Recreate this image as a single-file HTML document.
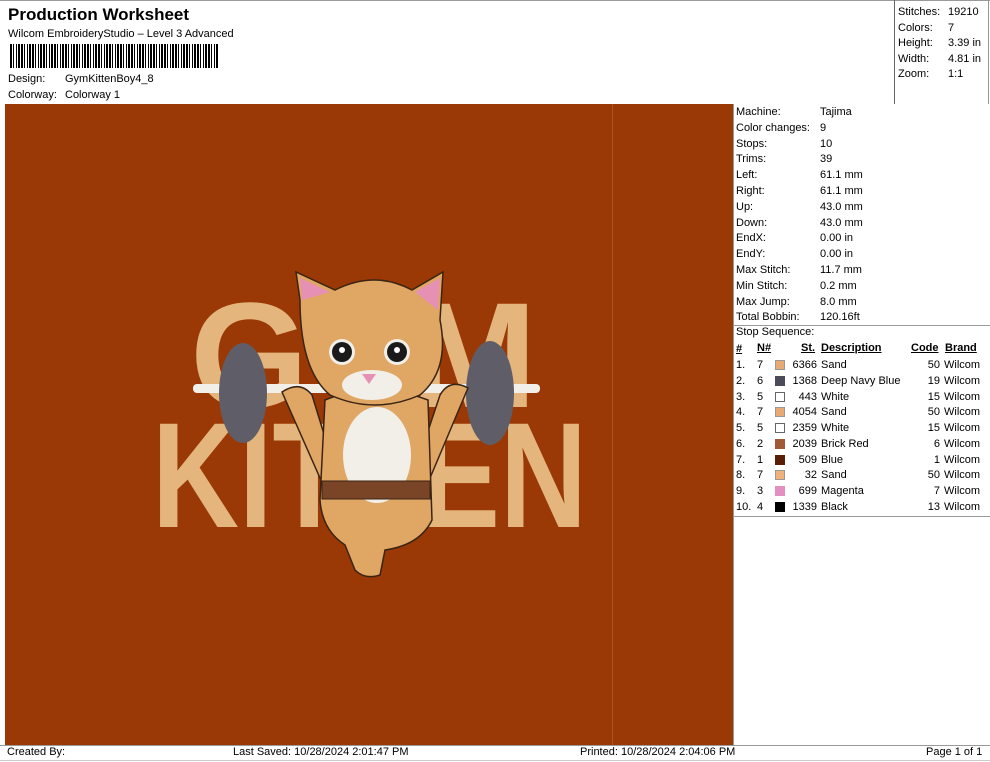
<!DOCTYPE html>
<html><head><meta charset="utf-8"><style>
*{margin:0;padding:0;box-sizing:border-box}
body{width:990px;height:762px;background:#fff;font-family:"Liberation Sans",sans-serif;color:#000;position:relative;overflow:hidden;font-size:11px}
.a{position:absolute;white-space:nowrap}
</style></head><body>
<div class="a" style="left:0;top:0;width:990px;height:1px;background:#999"></div>
<div class="a" style="left:8px;top:5px;font-size:17px;font-weight:bold">Production Worksheet</div>
<div class="a" style="left:8px;top:28px">Wilcom EmbroideryStudio – Level 3 Advanced</div>
<div class="a" style="left:10px;top:44px;width:208px;height:24px;background:repeating-linear-gradient(90deg,#000 0 2px,#fff 2px 3px,#000 3px 4px,#fff 4px 6px,#000 6px 7px,#fff 7px 8px,#000 8px 10px,#fff 10px 11px)"></div>
<div class="a" style="left:8px;top:73px">Design:</div><div class="a" style="left:65px;top:73px">GymKittenBoy4_8</div>
<div class="a" style="left:8px;top:89px">Colorway:</div><div class="a" style="left:65px;top:89px">Colorway 1</div>
<div class="a" style="left:894px;top:0;width:1px;height:104px;background:#666"></div>
<div class="a" style="left:988px;top:0;width:1px;height:104px;background:#999"></div>
<div class="a" style="left:898px;top:5px;line-height:15.6px">Stitches:<br>Colors:<br>Height:<br>Width:<br>Zoom:</div>
<div class="a" style="left:948px;top:5px;line-height:15.6px">19210<br>7<br>3.39 in<br>4.81 in<br>1:1</div>
<div class="a" style="left:5px;top:104px;width:728px;height:641px;background:#9a3905"></div>
<div class="a" style="left:612px;top:104px;width:1px;height:641px;background:#a85428"></div>
<svg class="a" style="left:0;top:0" width="733" height="745">
<g fill="#e4b67d" font-family="Liberation Sans" font-weight="bold">
<text x="190" y="407" font-size="150" textLength="347" lengthAdjust="spacingAndGlyphs">GYM</text>
<text x="152" y="527" font-size="150" textLength="435" lengthAdjust="spacingAndGlyphs">KITTEN</text>
</g>
<rect x="193" y="384" width="347" height="9" rx="4" fill="#f2efe8"/>
<ellipse cx="243" cy="393" rx="24" ry="50" fill="#5f5e68"/>
<ellipse cx="490" cy="393" rx="24" ry="52" fill="#5f5e68"/>
<g fill="#e0a663" stroke="#3a2414" stroke-width="1.5">
<path d="M282 392 Q300 380 312 395 L335 470 L320 478 Z"/>
<path d="M468 388 Q450 378 440 395 L415 470 L430 478 Z"/>
<path d="M325 400 Q375 380 428 400 L432 520 Q420 545 385 550 L380 575 Q365 580 355 570 L345 545 Q322 530 320 500 Z"/>
<path d="M300 300 L296 272 L335 290 Q375 270 412 290 L443 272 L440 320 Q450 370 420 395 Q375 415 330 395 Q300 370 300 300 Z"/>
</g>
<path d="M302 300 L300 278 L330 292 Z" fill="#e691b4"/>
<path d="M438 310 L440 278 L415 292 Z" fill="#e691b4"/>
<ellipse cx="377" cy="455" rx="34" ry="48" fill="#f2efe8"/>
<ellipse cx="372" cy="385" rx="30" ry="15" fill="#f2efe8"/>
<circle cx="342" cy="352" r="13" fill="#f2efe8"/><circle cx="342" cy="352" r="10" fill="#1a1a1a"/><circle cx="342" cy="350" r="3" fill="#fff"/>
<circle cx="397" cy="352" r="13" fill="#f2efe8"/><circle cx="397" cy="352" r="10" fill="#1a1a1a"/><circle cx="397" cy="350" r="3" fill="#fff"/>
<path d="M362 374 L376 374 L369 384 Z" fill="#e691b4"/>
<rect x="322" y="481" width="108" height="18" fill="#7a4527" stroke="#3a2414"/>
</svg>
<div class="a" style="left:733px;top:104px;width:1px;height:641px;background:#999"></div>
<div class="a" style="left:736px;top:105px;line-height:15.8px">Machine:<br>Color changes:<br>Stops:<br>Trims:<br>Left:<br>Right:<br>Up:<br>Down:<br>EndX:<br>EndY:<br>Max Stitch:<br>Min Stitch:<br>Max Jump:<br>Total Bobbin:</div>
<div class="a" style="left:820px;top:105px;line-height:15.8px">Tajima<br>9<br>10<br>39<br>61.1 mm<br>61.1 mm<br>43.0 mm<br>43.0 mm<br>0.00 in<br>0.00 in<br>11.7 mm<br>0.2 mm<br>8.0 mm<br>120.16ft</div>
<div class="a" style="left:733px;top:325px;width:257px;height:1px;background:#999"></div>
<div class="a" style="left:736px;top:326px">Stop Sequence:</div>
<div class="a" style="left:733px;top:516px;width:257px;height:1px;background:#999"></div>
<div class="a" style="left:736px;top:342px;line-height:15.75px;font-weight:bold;text-decoration:underline">#</div>
<div class="a" style="left:757px;top:342px;font-weight:bold;text-decoration:underline">N#</div>
<div class="a" style="left:801px;top:342px;font-weight:bold;text-decoration:underline">St.</div>
<div class="a" style="left:821px;top:342px;font-weight:bold;text-decoration:underline">Description</div>
<div class="a" style="left:911px;top:342px;font-weight:bold;text-decoration:underline">Code</div>
<div class="a" style="left:945px;top:342px;font-weight:bold;text-decoration:underline">Brand</div>
<div class="a" style="left:736px;top:358px;line-height:15.75px">1.<br>2.<br>3.<br>4.<br>5.<br>6.<br>7.<br>8.<br>9.<br>10.</div>
<div class="a" style="left:757px;top:358px;line-height:15.75px">7<br>6<br>5<br>7<br>5<br>2<br>1<br>7<br>3<br>4</div>
<div class="a" style="left:775px;top:358px;line-height:15.75px;width:10px">
<div style="height:15.75px;padding-top:2px"><div style="width:10px;height:10px;background:#e8a972;border:1px solid #999"></div></div>
<div style="height:15.75px;padding-top:2px"><div style="width:10px;height:10px;background:#4a4a58"></div></div>
<div style="height:15.75px;padding-top:2px"><div style="width:10px;height:10px;background:#fff;border:1px solid #666"></div></div>
<div style="height:15.75px;padding-top:2px"><div style="width:10px;height:10px;background:#e8a972;border:1px solid #999"></div></div>
<div style="height:15.75px;padding-top:2px"><div style="width:10px;height:10px;background:#fff;border:1px solid #666"></div></div>
<div style="height:15.75px;padding-top:2px"><div style="width:10px;height:10px;background:#a15a35"></div></div>
<div style="height:15.75px;padding-top:2px"><div style="width:10px;height:10px;background:#5a1e08"></div></div>
<div style="height:15.75px;padding-top:2px"><div style="width:10px;height:10px;background:#f0b27a;border:1px solid #999"></div></div>
<div style="height:15.75px;padding-top:2px"><div style="width:10px;height:10px;background:#e48fc0"></div></div>
<div style="height:15.75px;padding-top:2px"><div style="width:10px;height:10px;background:#000"></div></div>
</div>
<div class="a" style="left:780px;width:37px;text-align:right;top:358px;line-height:15.75px">6366<br>1368<br>443<br>4054<br>2359<br>2039<br>509<br>32<br>699<br>1339</div>
<div class="a" style="left:821px;top:358px;line-height:15.75px">Sand<br>Deep Navy Blue<br>White<br>Sand<br>White<br>Brick Red<br>Blue<br>Sand<br>Magenta<br>Black</div>
<div class="a" style="left:900px;width:40px;text-align:right;top:358px;line-height:15.75px">50<br>19<br>15<br>50<br>15<br>6<br>1<br>50<br>7<br>13</div>
<div class="a" style="left:944px;top:358px;line-height:15.75px">Wilcom<br>Wilcom<br>Wilcom<br>Wilcom<br>Wilcom<br>Wilcom<br>Wilcom<br>Wilcom<br>Wilcom<br>Wilcom</div>
<div class="a" style="left:0;top:745px;width:990px;height:1px;background:#999"></div>
<div class="a" style="left:0;top:760px;width:990px;height:1px;background:#ccc"></div>
<div class="a" style="left:7px;top:746px;font-size:11px">Created By:</div>
<div class="a" style="left:233px;top:746px">Last Saved: 10/28/2024 2:01:47 PM</div>
<div class="a" style="left:580px;top:746px">Printed: 10/28/2024 2:04:06 PM</div>
<div class="a" style="left:926px;top:746px">Page 1 of 1</div>
</body></html>
